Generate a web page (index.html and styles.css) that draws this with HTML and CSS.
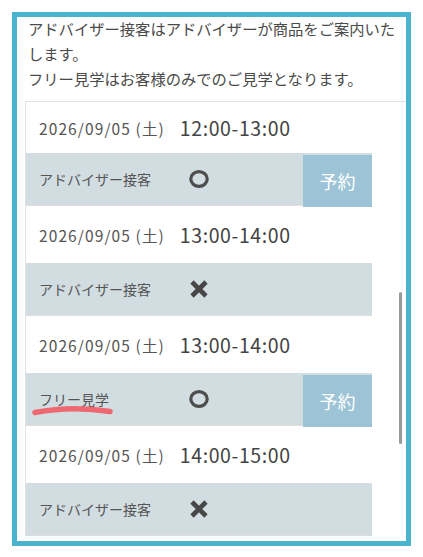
FILE: index.html
```html
<!DOCTYPE html>
<html lang="ja">
<head>
    <meta charset="UTF-8">
    <meta name="viewport" content="width=device-width, initial-scale=1.0">
    <title>予約枠</title>
    <link rel="stylesheet" href="styles.css">
</head>
<body>
    <div class="frame">
        <p class="note">
            アドバイザー接客はアドバイザーが商品をご案内いたします。<br>
            フリー見学はお客様のみでのご見学となります。
        </p>

        <div class="slot-list">
            <div class="slot">
                <div class="slot-date">
                    <span class="date">2026/09/05 (土)</span>
                    <span class="time">12:00-13:00</span>
                </div>
                <div class="slot-bar">
                    <span class="kind">アドバイザー接客</span>
                    <svg class="mark" viewBox="0 0 20 20"><ellipse cx="10" cy="10" rx="8.2" ry="7.4" fill="none" stroke="#4d4d4d" stroke-width="3.2"/></svg>
                    <button class="reserve-btn">予約</button>
                </div>
            </div>

            <div class="slot">
                <div class="slot-date">
                    <span class="date">2026/09/05 (土)</span>
                    <span class="time">13:00-14:00</span>
                </div>
                <div class="slot-bar">
                    <span class="kind">アドバイザー接客</span>
                    <svg class="mark" viewBox="0 0 20 20"><path d="M3 3L17 17M17 3L3 17" stroke="#474747" stroke-width="4.6"/></svg>
                </div>
            </div>

            <div class="slot">
                <div class="slot-date">
                    <span class="date">2026/09/05 (土)</span>
                    <span class="time">13:00-14:00</span>
                </div>
                <div class="slot-bar">
                    <span class="kind marked">フリー見学
                        <svg class="marker" viewBox="0 0 84 12"><path d="M3 8.5Q40 1.5 78 7.5" fill="none" stroke="#ee6871" stroke-width="5.5" stroke-linecap="round"/></svg>
                    </span>
                    <svg class="mark" viewBox="0 0 20 20"><ellipse cx="10" cy="10" rx="8.2" ry="7.4" fill="none" stroke="#4d4d4d" stroke-width="3.2"/></svg>
                    <button class="reserve-btn">予約</button>
                </div>
            </div>

            <div class="slot">
                <div class="slot-date">
                    <span class="date">2026/09/05 (土)</span>
                    <span class="time">14:00-15:00</span>
                </div>
                <div class="slot-bar">
                    <span class="kind">アドバイザー接客</span>
                    <svg class="mark" viewBox="0 0 20 20"><path d="M3 3L17 17M17 3L3 17" stroke="#474747" stroke-width="4.6"/></svg>
                </div>
            </div>
        </div>

        <div class="scroll-thumb"></div>
    </div>
</body>
</html>
```

FILE: styles.css
```css
body {
    margin: 0;
    padding: 12px;
    background-color: #fff;
    font-family: "Noto Sans CJK JP", "Noto Sans", sans-serif;
    color: #444;
}
.frame {
    position: relative;
    width: 389px;
    height: 524px;
    border: 5px solid #4ab4d0;
    overflow: hidden;
}
.note {
    margin: -1px 6px 10px 11px;
    font-size: 15.3px;
    line-height: 25px;
    color: #4a4a4a;
}
.slot-list {
    margin-left: 8px;
    border-top: 1px solid #e2e2e2;
    border-left: 1px solid #e2e2e2;
}
.slot {
    width: 346px;
    border-bottom: 1px solid #dedede;
}
.slot-date {
    height: 57px;
    display: flex;
    align-items: center;
    gap: 15px;
    padding-left: 13px;
}
.slot:first-child .slot-date {
    height: 51px;
}
.date {
    font-size: 15.5px;
    letter-spacing: 1.1px;
    color: #555;
}
.time {
    font-size: 19.5px;
    letter-spacing: 0.6px;
    color: #444;
}
.slot-bar {
    height: 52px;
    display: flex;
    align-items: center;
    background-color: #d2dde1;
}
.kind {
    width: 150px;
    padding-left: 13px;
    font-size: 14px;
    color: #555;
}
.marked {
    position: relative;
}
.marker {
    position: absolute;
    left: 6px;
    top: 15px;
    width: 84px;
    height: 12px;
}
.mark {
    width: 20px;
    height: 20px;
}
.reserve-btn {
    margin: 2px 0 -2px auto;
    width: 69px;
    height: 52px;
    border: none;
    padding: 0;
    background-color: #9cc4d6;
    color: #fff;
    font-family: inherit;
    font-size: 18px;
}
.scroll-thumb {
    position: absolute;
    left: 382px;
    top: 275px;
    width: 3px;
    height: 152px;
    border-radius: 2px;
    background-color: #9a9a9a;
}
```
